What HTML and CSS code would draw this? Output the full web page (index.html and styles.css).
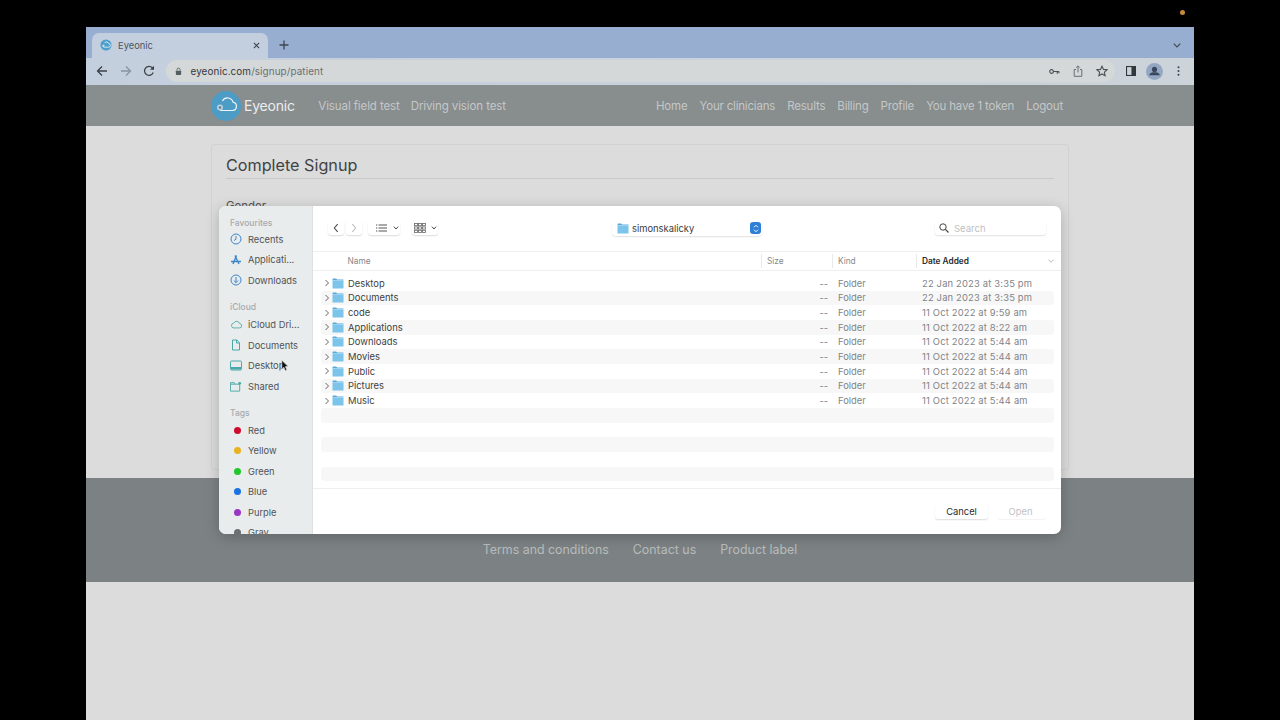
FILE: index.html
```html
<!DOCTYPE html>
<html lang="en">
<head>
<meta charset="utf-8">
<title>Eyeonic</title>
<link rel="stylesheet" href="styles.css">
</head>
<body>
<svg class="defs" width="0" height="0" aria-hidden="true">
  <symbol id="folder" viewBox="0 0 12 11">
    <path d="M.5 2V1.200C.5.700.9.400 1.300.400h2.600c.4 0 .6.200.8.500l.4.600h6c.3 0 .4.200.4.500V2z" fill="#5aa9d6"/>
    <rect x=".5" y="2" width="11" height="8.600" rx=".7" fill="#7cc4ea"/>
    <rect x=".5" y="2" width="11" height=".8" fill="#a5d8f2"/>
  </symbol>
  <symbol id="chev" viewBox="0 0 6 8">
    <path d="M1.500 1l3 3-3 3" fill="none" stroke="#666" stroke-width="1"/>
  </symbol>
</svg>
<span class="rec-dot"></span>
<div class="browser">
  <div class="tabstrip">
    <div class="tab">
      <svg class="favicon" viewBox="0 0 14 14"><circle cx="7" cy="7" r="6.500" fill="#4f9fcb"/><path d="M4 9.500h6a2 2 0 0 0 .3-4 2.700 2.700 0 0 0-5-.6" fill="none" stroke="#e6f1f7" stroke-width="1"/><circle cx="4" cy="8" r="1.300" fill="#d5e6f0"/></svg>
      <span class="tab-title">Eyeonic</span>
      <svg class="tab-close" viewBox="0 0 8 8"><path d="M1 1l6 6M7 1L1 7" stroke="#3b4047" stroke-width="1.200"/></svg>
    </div>
    <svg class="tab-new" viewBox="0 0 10 10"><path d="M5 .5v9M.5 5h9" stroke="#3e4650" stroke-width="1.300"/></svg>
    <svg class="tab-menu" viewBox="0 0 8 5"><path d="M.7.700L4 4l3.300-3.300" fill="none" stroke="#3e4650" stroke-width="1.100"/></svg>
  </div>
  <div class="toolbar">
    <svg class="tool back" viewBox="0 0 12 12"><path d="M11 6H1.500M6 1.500L1.500 6 6 10.500" fill="none" stroke="#3c4148" stroke-width="1.300"/></svg>
    <svg class="tool fwd" viewBox="0 0 12 12"><path d="M1 6h9.500M6 1.500L10.500 6 6 10.500" fill="none" stroke="#8b939c" stroke-width="1.300"/></svg>
    <svg class="tool reload" viewBox="0 0 12 12"><path d="M10.200 7.500A4.500 4.500 0 1 1 9.300 2.800L10.500 4" fill="none" stroke="#3c4148" stroke-width="1.300"/><path d="M11 .8V4.800H7z" fill="#3c4148"/></svg>
    <div class="omnibox">
      <svg class="lock" viewBox="0 0 8 10"><rect x="1" y="4" width="6" height="5" rx=".8" fill="#555b60"/><path d="M2.300 4V2.800a1.700 1.700 0 0 1 3.400 0V4" fill="none" stroke="#555b60"/></svg>
      <span class="url"><span class="url-host">eyeonic.com</span>/signup/patient</span>
      <span class="omni-icons">
        <svg class="omni-key" viewBox="0 0 12 7"><circle cx="2.800" cy="3.500" r="2" fill="none" stroke="#4a4f54" stroke-width="1.200"/><path d="M5 3.500h6M9 3.500V6M10.800 3.500V5.500" fill="none" stroke="#4a4f54" stroke-width="1.200"/></svg>
        <svg class="omni-share" viewBox="0 0 10 12"><path d="M3 4.500H1.200v6.800h7.600V4.500H7M5 7.500V1M3.200 2.600L5 .8l1.800 1.800" fill="none" stroke="#6a6f74"/></svg>
        <svg class="omni-star" viewBox="0 0 12 12"><path d="M6 1.200l1.500 3.200 3.500.4-2.600 2.400.7 3.500L6 8.900l-3.100 1.800.7-3.500L1 4.800l3.500-.4z" fill="none" stroke="#4a4f54" stroke-width="1.100"/></svg>
      </span>
    </div>
    <svg class="side-panel" viewBox="0 0 11 11"><rect x=".6" y=".6" width="9.800" height="9.800" fill="none" stroke="#33383d" stroke-width="1.200"/><rect x="6" y="1" width="4" height="9" fill="#33383d"/></svg>
    <span class="avatar"><svg viewBox="0 0 20 20"><circle cx="10" cy="7.500" r="3" fill="#39475c"/><path d="M3.500 14.500c1-3 4-3.500 6.500-3.500s5.500.5 6.500 3.500z" fill="#39475c"/></svg></span>
    <svg class="kebab" viewBox="0 0 3 11"><circle cx="1.500" cy="1.500" r="1.100" fill="#3c4148"/><circle cx="1.500" cy="5.500" r="1.100" fill="#3c4148"/><circle cx="1.500" cy="9.500" r="1.100" fill="#3c4148"/></svg>
  </div>

  <header class="site-nav">
    <div class="brand">
      <svg class="brand-logo" viewBox="0 0 30 30"><circle cx="15" cy="15" r="15" fill="#4d9cc6"/><path d="M9 19.500h12.500a4.200 4.200 0 0 0 .6-8.300 5.800 5.800 0 0 0-10.700-1.200" fill="none" stroke="#eef5f8" stroke-width="1.200"/><circle cx="9" cy="16.500" r="3" fill="#b7d3e1"/><circle cx="9" cy="16.500" r="1.300" fill="#5f7d8d"/></svg>
      <span class="brand-name">Eyeonic</span>
    </div>
    <nav class="links">
      <a>Visual field test</a>
      <a>Driving vision test</a>
    </nav>
    <nav class="links links-right">
      <a>Home</a>
      <a>Your clinicians</a>
      <a>Results</a>
      <a>Billing</a>
      <a>Profile</a>
      <a>You have 1 token</a>
      <a>Logout</a>
    </nav>
  </header>

  <main class="content">
    <section class="card">
      <h1 class="card-title">Complete Signup</h1>
      <div class="field-label">Gender</div>
    </section>
  </main>

  <footer class="site-footer">
    <a>Terms and conditions</a>
    <a>Contact us</a>
    <a>Product label</a>
  </footer>
  <div class="page-rest"></div>
</div>

<div class="dialog">
  <aside class="sidebar">
    <div class="side-label first">Favourites</div>
    <div class="side-item"><svg class="si" viewBox="0 0 12 12"><circle cx="6" cy="6" r="5" fill="none" stroke="#3f86c9"/><path d="M6 3v3.200L4 7.500" fill="none" stroke="#3f86c9"/></svg>Recents</div>
    <div class="side-item"><svg class="si" viewBox="0 0 12 12"><path d="M6.500 1.500L3 10M5 1.500L9 10M1 7.500h10" fill="none" stroke="#3f86c9" stroke-width="1.400"/></svg>Applicati...</div>
    <div class="side-item"><svg class="si" viewBox="0 0 12 12"><circle cx="6" cy="6" r="5" fill="none" stroke="#3f86c9"/><path d="M6 3v5.500M3.800 6.500L6 8.700l2.200-2.200" fill="none" stroke="#3f86c9"/></svg>Downloads</div>
    <div class="side-label">iCloud</div>
    <div class="side-item"><svg class="si si-wide" viewBox="0 0 14 10"><path d="M3.500 9h7.500a2.500 2.500 0 0 0 .3-5 3.800 3.800 0 0 0-7-.7A3 3 0 0 0 3.500 9z" fill="none" stroke="#4aa8a8"/></svg>iCloud Dri...</div>
    <div class="side-item"><svg class="si" viewBox="0 0 12 12"><path d="M2.500 1h4.300L9.500 3.700V11h-7zM6.500 1v3h3" fill="none" stroke="#4aa8a8"/></svg>Documents</div>
    <div class="side-item"><svg class="si si-wide" viewBox="0 0 12 10"><rect x=".5" y=".5" width="11" height="9" rx="1.200" fill="none" stroke="#4aa8a8"/><rect x="1" y="6.500" width="10" height="2.500" fill="#4aa8a8"/></svg>Desktop</div>
    <div class="side-item"><svg class="si si-wide" viewBox="0 0 13 11"><path d="M.5 3h10v7.500H.5zM.5 3V1.300h4L5.500 3" fill="none" stroke="#4aa8a8"/><circle cx="10.500" cy="2" r="1.500" fill="#4aa8a8"/></svg>Shared</div>
    <div class="side-label">Tags</div>
    <div class="side-item"><span class="tag tag-red"></span>Red</div>
    <div class="side-item"><span class="tag tag-yellow"></span>Yellow</div>
    <div class="side-item"><span class="tag tag-green"></span>Green</div>
    <div class="side-item"><span class="tag tag-blue"></span>Blue</div>
    <div class="side-item"><span class="tag tag-purple"></span>Purple</div>
    <div class="side-item"><span class="tag tag-gray"></span>Gray</div>
  </aside>
  <div class="finder">
    <div class="finder-bar">
      <span class="fbtn fbtn-nav"><svg viewBox="0 0 7 11"><path d="M5.500 1L1.500 5.500l4 4.500" fill="none" stroke="#444" stroke-width="1.200"/></svg></span>
      <span class="fbtn fbtn-nav"><svg viewBox="0 0 7 11"><path d="M1.500 1l4 4.500-4 4.500" fill="none" stroke="#bbb" stroke-width="1.200"/></svg></span>
      <span class="fbtn fbtn-list">
        <svg class="fb-list" viewBox="0 0 11 8"><path d="M2.500 1H11M2.500 4H11M2.500 7H11M0 1h1.300M0 4h1.300M0 7h1.300" stroke="#555" fill="none"/></svg>
        <svg class="fb-down" viewBox="0 0 7 5"><path d="M.8.800L3.500 3.800 6.200.800" fill="none" stroke="#444" stroke-width="1.200"/></svg>
      </span>
      <span class="fbtn fbtn-grid">
        <svg class="fb-grid" viewBox="0 0 12 10"><g fill="none" stroke="#666" stroke-width=".8"><rect x=".5" y=".5" width="3" height="2.200"/><rect x="4.500" y=".5" width="3" height="2.200"/><rect x="8.500" y=".5" width="3" height="2.200"/><rect x=".5" y="3.900" width="3" height="2.200"/><rect x="4.500" y="3.900" width="3" height="2.200"/><rect x="8.500" y="3.900" width="3" height="2.200"/><rect x=".5" y="7.300" width="3" height="2.200"/><rect x="4.500" y="7.300" width="3" height="2.200"/><rect x="8.500" y="7.300" width="3" height="2.200"/></g></svg>
        <svg class="fb-down" viewBox="0 0 7 5"><path d="M.8.800L3.500 3.800 6.200.800" fill="none" stroke="#444" stroke-width="1.200"/></svg>
      </span>
      <span class="path-pop">
        <svg class="row-folder"><use href="#folder"/></svg>
        <span class="path-name">simonskalicky</span>
        <span class="path-step"><svg viewBox="0 0 6 9"><path d="M1 3.300L3 1.300l2 2M1 5.700l2 2 2-2" fill="none" stroke="#fff"/></svg></span>
      </span>
      <span class="search">
        <svg viewBox="0 0 10 10"><circle cx="4" cy="4" r="3.200" fill="none" stroke="#444"/><path d="M6.400 6.400L9.500 9.500" stroke="#444" stroke-width="1.200"/></svg>
        <span>Search</span>
      </span>
    </div>
    <div class="col-head">
      <span class="ch-name">Name</span>
      <span class="ch">Size</span>
      <span class="ch">Kind</span>
      <span class="ch ch-sort">Date Added<svg viewBox="0 0 7 4"><path d="M.5.500L3.500 3.500 6.500.500" fill="none" stroke="#999" stroke-width=".8"/></svg></span>
    </div>
    <div class="file-list">
      <div class="file-row"><span class="fr-name"><svg class="row-chev"><use href="#chev"/></svg><svg class="row-folder"><use href="#folder"/></svg></span><span class="fr-title">Desktop</span><span class="fr-size">--</span><span class="fr-kind">Folder</span><span class="fr-date">22 Jan 2023 at 3:35 pm</span></div>
      <div class="file-row"><span class="fr-name"><svg class="row-chev"><use href="#chev"/></svg><svg class="row-folder"><use href="#folder"/></svg></span><span class="fr-title">Documents</span><span class="fr-size">--</span><span class="fr-kind">Folder</span><span class="fr-date">22 Jan 2023 at 3:35 pm</span></div>
      <div class="file-row"><span class="fr-name"><svg class="row-chev"><use href="#chev"/></svg><svg class="row-folder"><use href="#folder"/></svg></span><span class="fr-title">code</span><span class="fr-size">--</span><span class="fr-kind">Folder</span><span class="fr-date">11 Oct 2022 at 9:59 am</span></div>
      <div class="file-row"><span class="fr-name"><svg class="row-chev"><use href="#chev"/></svg><svg class="row-folder"><use href="#folder"/></svg></span><span class="fr-title">Applications</span><span class="fr-size">--</span><span class="fr-kind">Folder</span><span class="fr-date">11 Oct 2022 at 8:22 am</span></div>
      <div class="file-row"><span class="fr-name"><svg class="row-chev"><use href="#chev"/></svg><svg class="row-folder"><use href="#folder"/></svg></span><span class="fr-title">Downloads</span><span class="fr-size">--</span><span class="fr-kind">Folder</span><span class="fr-date">11 Oct 2022 at 5:44 am</span></div>
      <div class="file-row"><span class="fr-name"><svg class="row-chev"><use href="#chev"/></svg><svg class="row-folder"><use href="#folder"/></svg></span><span class="fr-title">Movies</span><span class="fr-size">--</span><span class="fr-kind">Folder</span><span class="fr-date">11 Oct 2022 at 5:44 am</span></div>
      <div class="file-row"><span class="fr-name"><svg class="row-chev"><use href="#chev"/></svg><svg class="row-folder"><use href="#folder"/></svg></span><span class="fr-title">Public</span><span class="fr-size">--</span><span class="fr-kind">Folder</span><span class="fr-date">11 Oct 2022 at 5:44 am</span></div>
      <div class="file-row"><span class="fr-name"><svg class="row-chev"><use href="#chev"/></svg><svg class="row-folder"><use href="#folder"/></svg></span><span class="fr-title">Pictures</span><span class="fr-size">--</span><span class="fr-kind">Folder</span><span class="fr-date">11 Oct 2022 at 5:44 am</span></div>
      <div class="file-row"><span class="fr-name"><svg class="row-chev"><use href="#chev"/></svg><svg class="row-folder"><use href="#folder"/></svg></span><span class="fr-title">Music</span><span class="fr-size">--</span><span class="fr-kind">Folder</span><span class="fr-date">11 Oct 2022 at 5:44 am</span></div>
      <div class="file-row"></div><div class="file-row"></div><div class="file-row"></div><div class="file-row"></div><div class="file-row"></div>
    </div>
    <div class="finder-foot">
      <span class="btn btn-cancel">Cancel</span>
      <span class="btn btn-open">Open</span>
    </div>
  </div>
</div>
<svg class="cursor" viewBox="0 0 10 15"><path d="M1 1v11l2.600-2.400L5.300 14l2-.9-1.800-4.200H9z" fill="#111" stroke="#eee" stroke-width=".7"/></svg>
</body>
</html>
```
FILE: styles.css
```css
* { box-sizing: border-box; }
html, body { margin: 0; height: 720px; overflow: hidden; background: #000; font-family: Inter, "Liberation Sans", sans-serif; }
a { color: inherit; text-decoration: none; }
.defs { display: block; position: absolute; }
.rec-dot { position: absolute; left: 1179.500px; top: 9.500px; width: 5px; height: 5px; border-radius: 50%; background: #c48a3c; }
.browser { margin: 27px 86px 0; width: 1108px; height: 693px; display: flex; flex-direction: column; background: #dcdcdc; }

.tabstrip { height: 31px; background: #98aed0; display: flex; align-items: flex-end; padding-left: 6px; flex: none; }
.tab { width: 176px; height: 25px; background: #c3cfdf; border-radius: 7px 7px 0 0; display: flex; align-items: center; padding: 0 8px 1px; }
.favicon { width: 12px; height: 12px; margin-right: 6px; }
.tab-title { font-size: 9.400px; color: #4e5660; flex: 1; }
.tab-close { width: 7px; height: 7px; }
.tab-new { width: 10px; height: 10px; margin: 0 0 8px 11px; }
.tab-menu { width: 8px; height: 5px; margin: 0 13px 10px auto; }

.toolbar { height: 27px; flex: none; background: linear-gradient(90deg, #c4cfde, #ccd3d9); display: flex; align-items: center; padding: 0 14.500px 1px 10px; }
.tool { width: 12px; height: 12px; margin-right: 11.500px; }
.omnibox { flex: 1; height: 22px; margin-left: -1px; background: #d4d8d9; border-radius: 11px; display: flex; align-items: center; padding: 0 7px 0 9px; }
.lock { width: 7px; height: 9px; margin-right: 9px; }
.url { font-size: 9.900px; color: #6a6f74; letter-spacing: .1px; }
.url-host { color: #34393e; }
.omni-icons { margin-left: auto; display: flex; align-items: center; gap: 13px; }
.omni-key { width: 11px; height: 7px; }
.omni-share { width: 10px; height: 12px; }
.omni-star { width: 12px; height: 12px; }
.side-panel { width: 10px; height: 10px; margin-left: 11px; }
.avatar { width: 17px; height: 17px; margin-left: 9.500px; border-radius: 50%; background: #93a7c4; display: flex; }
.avatar svg { width: 17px; height: 17px; }
.kebab { width: 3px; height: 10px; margin-left: 14px; }

.site-nav { height: 41px; flex: none; background: #888d8e; display: flex; align-items: center; padding: 0 131px 0 125px; color: #c4c8c8; font-size: 11.500px; letter-spacing: -.1px; }
.brand { display: flex; align-items: center; margin-right: 23.500px; }
.brand-logo { width: 30px; height: 30px; }
.brand-name { font-size: 14px; color: #eceeee; margin-left: 3px; letter-spacing: -.2px; }
.links { display: flex; gap: 11px; }
.links-right { margin-left: auto; gap: 12px; letter-spacing: -.19px; }

.content { height: 352px; flex: none; padding: 18px 125px 0; background: #dcdcdc; }
.card { height: 326px; border: 1px solid #d2d2d2; border-radius: 3px; padding: 10px 14px; color: #3f4344; }
.card-title { margin: 0; font-size: 16.200px; font-weight: 400; line-height: 21px; padding-bottom: 2px; border-bottom: 1px solid #c9c9c9; }
.field-label { margin-top: 20px; font-size: 11.500px; color: #555; }

.site-footer { height: 104px; flex: none; background: #7c8284; display: flex; justify-content: center; align-items: flex-end; gap: 24px; padding: 0 0 24px; font-size: 12.400px; color: #b8bcbc; line-height: 16px; }
.page-rest { flex: 1; background: #dcdcdc; }

.dialog { position: absolute; left: 219px; top: 206px; width: 842px; height: 328px; border-radius: 7px; overflow: hidden; display: flex; background: #fff; box-shadow: 0 3px 14px rgba(0,0,0,.22); }
.sidebar { width: 94px; flex: none; background: #e9ecec; padding: 10px 0 0 11px; overflow: hidden; font-size: 9.300px; color: #4f5356; border-right: 1px solid #dfe1e1; }
.side-label { font-size: 8.500px; color: #a6aaac; line-height: 13px; margin-top: 10.750px; font-weight: 500; }
.side-label.first { margin-top: 0; padding-top: 2px; line-height: 11px; }
.side-item { height: 20.500px; display: flex; align-items: center; white-space: nowrap; flex: none; }
.si { width: 12px; height: 12px; margin-right: 6px; flex: none; }
.si-wide { height: 11px; }
.tag { width: 7px; height: 7px; border-radius: 50%; margin: 0 7px 0 4px; flex: none; }
.tag-red { background: #cf0a2c; }
.tag-yellow { background: #e6b21e; }
.tag-green { background: #22c72e; }
.tag-blue { background: #1a73e0; }
.tag-purple { background: #9a36c4; }
.tag-gray { background: #6c6f72; }

.finder { flex: 1; display: flex; flex-direction: column; min-width: 0; }
.finder-bar { height: 45px; flex: none; display: flex; align-items: center; padding: 0 0 1px 15px; }
.fbtn { height: 14px; display: flex; align-items: center; justify-content: center; background: #fff; border-radius: 3px; box-shadow: 0 1px 1.500px rgba(0,0,0,.14); }
.fbtn-nav { width: 16px; margin-right: 2px; }
.fbtn-nav svg { width: 6px; height: 10px; }
.fbtn-list { width: 32px; margin-left: 4px; justify-content: flex-start; padding-left: 8px; gap: 6px; }
.fbtn-grid { width: 26px; margin-left: 12px; justify-content: flex-start; padding-left: 2px; gap: 5px; }
.fb-list { width: 11px; height: 8px; }
.fb-grid { width: 12px; height: 10px; }
.fb-down { width: 6px; height: 4px; }
.path-pop { margin-left: 174px; width: 150px; height: 15px; display: flex; align-items: center; padding-left: 5px; border-radius: 4px; box-shadow: 0 1px 1.500px rgba(0,0,0,.12); font-size: 9.400px; color: #3a3d40; }
.path-name { flex: 1; margin-left: 3px; }
.path-step { width: 11px; height: 12px; border-radius: 3px; background: #2f7fd6; display: flex; align-items: center; justify-content: center; margin-right: 1px; }
.path-step svg { width: 6px; height: 9px; }
.search { margin-left: 173px; width: 111px; height: 14px; display: flex; align-items: center; padding-left: 4px; border-radius: 3px; box-shadow: 0 1px 1.500px rgba(0,0,0,.12); font-size: 9.500px; color: #bfc1c3; gap: 5px; }
.search svg { width: 10px; height: 10px; }

.col-head { height: 20px; flex: none; display: grid; grid-template-columns: 448px 71px 84px 1fr; align-items: center; border-top: 1px solid #efefef; border-bottom: 1px solid #efefef; font-size: 8.300px; color: #85888a; }
.ch-name { padding-left: 34.500px; }
.ch { height: 14px; line-height: 14px; padding-left: 5px; border-left: 1px solid #e9e9e9; }
.ch-sort { color: #2a2c2e; font-weight: 600; display: flex; align-items: center; justify-content: space-between; padding-right: 7px; }
.ch-sort svg { width: 6px; height: 4px; }

.file-list { height: 218px; flex: none; padding: 5px 7px 0 8px; overflow: hidden; border-bottom: 1px solid #eee; }
.file-row { height: 14.660px; display: grid; grid-template-columns: 27px 1fr 30px 94px 132px; align-items: center; border-radius: 3px; font-size: 9.400px; color: #818487; }
.file-row:nth-child(even) { background: #f7f7f7; }
.fr-name { display: flex; align-items: center; padding-left: 3px; }
.row-chev { width: 6px; height: 8px; margin-right: 2px; flex: none; }
.row-folder { width: 12px; height: 11px; flex: none; }
.fr-title { color: #3c3f42; }
.fr-size { text-align: right; }
.fr-kind { padding-left: 10px; }
.fr-date { letter-spacing: .18px; }

.finder-foot { flex: 1; display: flex; justify-content: flex-end; align-items: center; gap: 8px; padding: 0 15px 0 0; }
.btn { height: 15px; line-height: 15px; text-align: center; border-radius: 3px; font-size: 9.400px; box-shadow: 0 1px 1.500px rgba(0,0,0,.14); }
.btn-cancel { width: 53px; color: #2a2c2e; margin-right: 1px; }
.btn-open { width: 49px; padding-right: 2px; color: #c0c2c4; box-shadow: 0 1px 1px rgba(0,0,0,.05); }

.cursor { position: absolute; left: 281px; top: 359px; width: 8px; height: 13px; }
```
